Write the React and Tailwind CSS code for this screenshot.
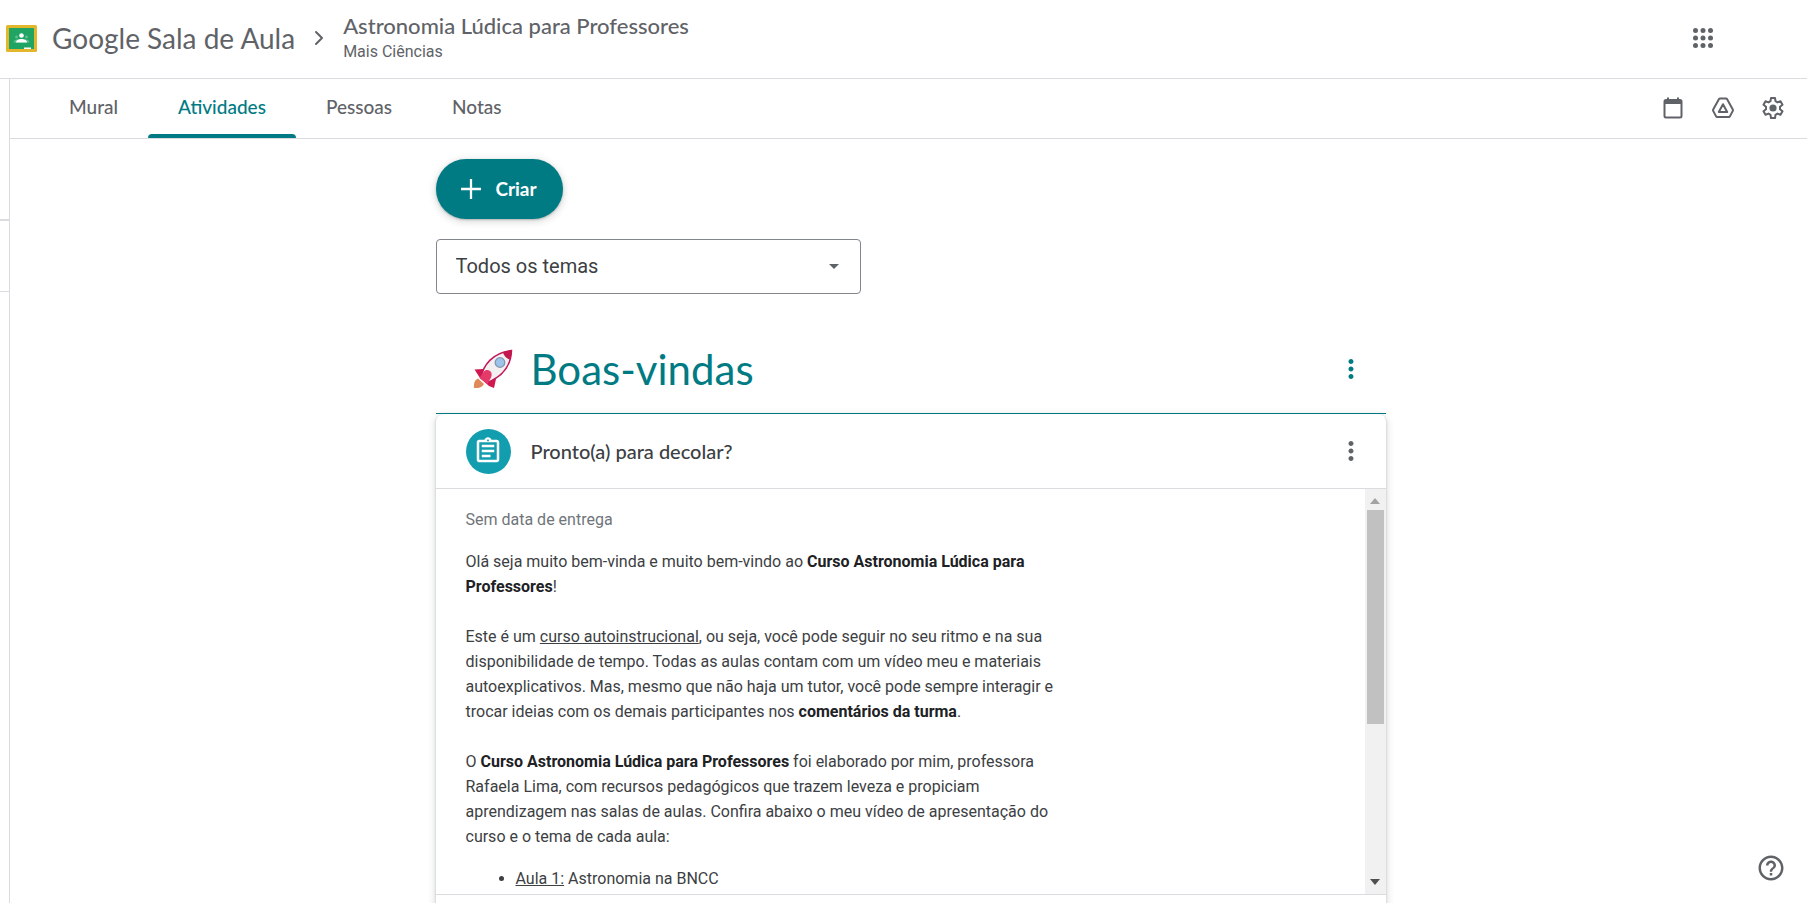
import { ChevronRight } from 'lucide-react';
import { MdMoreVert, MdOutlineAssignment, MdHelpOutline } from 'react-icons/md';

const TABS = ['Mural', 'Atividades', 'Pessoas', 'Notas'];

function ClassroomLogo() {
  return (
    <svg viewBox="0 0 31 27" className="h-[27px] w-[31px] shrink-0" aria-hidden="true">
      <rect width="31" height="27" rx="1.500" fill="#e3b62b" />
      <rect x="3" y="3" width="25" height="21" fill="#1fa463" />
      <circle cx="15.500" cy="10.500" r="2.300" fill="#fff" />
      <circle cx="10.500" cy="12" r="1.400" fill="#5fc08f" />
      <circle cx="20.500" cy="12" r="1.400" fill="#5fc08f" />
      <path d="M7.500 17.500c0-2 2-3 3.500-3h9c1.500 0 3.500 1 3.500 3z" fill="#5fc08f" />
      <path d="M10 17.500c0-2.500 3-3.500 5.500-3.500s5.500 1 5.500 3.500z" fill="#fff" />
      <rect x="18" y="22.500" width="7" height="1.500" fill="#fff" />
    </svg>
  );
}

function AppsIcon() {
  return (
    <svg viewBox="0 0 24 24" className="size-[30px]" fill="currentColor" aria-hidden="true">
      {[6, 12, 18].map((y) => [6, 12, 18].map((x) => <circle key={`${x}-${y}`} cx={x} cy={y} r="2" />))}
    </svg>
  );
}

function CalendarIcon() {
  return (
    <svg viewBox="0 0 24 24" className="size-6" fill="none" stroke="currentColor" strokeWidth="2" aria-hidden="true">
      <rect x="3.500" y="4" width="17" height="17.500" rx="1.500" />
      <path d="M3.500 6h17" strokeWidth="4" />
      <path d="M7 1.500v4M17 1.500v4" />
    </svg>
  );
}

function DriveIcon() {
  return (
    <svg viewBox="0 0 24 24" className="size-6" fill="none" stroke="currentColor" strokeWidth="2" strokeLinejoin="round" aria-hidden="true">
      <path d="M9 2.500h6q.7 0 1 .6l5.800 10.400q.4.700 0 1.400l-2.900 5.500q-.4.600-1.100.6H6.200q-.7 0-1.100-.6l-2.900-5.500q-.4-.7 0-1.400L8 3.100q.3-.6 1-.6z" />
      <path d="M12 8.200l4.200 7.800H7.800z" />
    </svg>
  );
}

function GearIcon() {
  return (
    <svg viewBox="0 0 24 24" className="size-6" fill="none" stroke="currentColor" strokeWidth="2" strokeLinejoin="round" aria-hidden="true">
      <path d="M10 2h4l.5 3.200 2 1.200 3-1.200 2 3.500-2.500 2v2.600l2.500 2-2 3.500-3-1.200-2 1.200L14 22h-4l-.5-3.200-2-1.200-3 1.200-2-3.500 2.500-2v-2.600l-2.500-2 2-3.500 3 1.200 2-1.200z" />
      <circle cx="12" cy="12" r="3.600" fill="currentColor" stroke="none" />
    </svg>
  );
}

function Rocket() {
  return (
    <svg viewBox="0 0 40 40" className="size-10 shrink-0" aria-hidden="true">
      <path d="M1 39c-.5-4 .5-8 4-9.500l6 5.500c-2 3.500-6 4.500-10 4z" fill="#e08a5b" />
      <path d="M10 20L1.500 20.500 7 29l9 8 5 2 2-9z" fill="#d0174e" />
      <path d="M8 29C10 16 20 3.500 38.500 1.500 38 18 28 28 14.500 33.500z" fill="#f3f0f1" stroke="#c2185b" strokeWidth="1.500" />
      <path d="M30 3.500c3-1.300 5.500-2 8.500-2 .2 3.500-.5 6.500-2 9-2.800-1-5.500-3.500-6.500-7z" fill="#c2184b" />
      <path d="M6.500 29l4-6c2-2.500 4.500-2.500 6.500-1s2 4 1 6.500L14.500 35z" fill="#e5396a" />
      <circle cx="27" cy="13.500" r="4.800" fill="#9cc3ea" stroke="#8296ad" strokeWidth="1.300" />
    </svg>
  );
}

function Header() {
  return (
    <header className="flex h-[79px] shrink-0 items-center border-b border-[#dadce0] pr-[89px] pb-0.5 pl-[6px] text-[#5f6368]">
      <ClassroomLogo />
      <span className="ml-[15px] font-['Lato',sans-serif] text-[28px]">Google Sala de Aula</span>
      <ChevronRight className="ml-3 size-6" strokeWidth={2} />
      <div className="ml-3">
        <h1 className="font-['Lato',sans-serif] text-[22px] leading-7 font-medium">Astronomia Lúdica para Professores</h1>
        <p className="text-base leading-6">Mais Ciências</p>
      </div>
      <button type="button" aria-label="Google Apps" className="ml-auto">
        <AppsIcon />
      </button>
    </header>
  );
}

function TabBar() {
  return (
    <nav className="flex h-[60px] shrink-0 items-stretch border-b border-[#dadce0] pr-[22px] pl-[29px] text-[#5f6368]">
      {TABS.map((tab) => (
        <button
          key={tab}
          type="button"
          className={`relative px-[30px] pb-0.5 font-['Lato',sans-serif] text-[19px] font-medium ${tab === 'Atividades' ? 'text-[#007b83]' : ''}`}
        >
          {tab}
          {tab === 'Atividades' && <span className="absolute inset-x-0 bottom-0 h-1 rounded-t bg-[#007b83]" />}
        </button>
      ))}
      <div className="ml-auto flex items-center gap-[26px] pb-0.5">
        <button type="button" aria-label="Google Agenda"><CalendarIcon /></button>
        <button type="button" aria-label="Google Drive"><DriveIcon /></button>
        <button type="button" aria-label="Configurações"><GearIcon /></button>
      </div>
    </nav>
  );
}

function Scrollbar() {
  return (
    <div className="flex w-[21px] shrink-0 flex-col items-center bg-[#f1f1f1]" aria-hidden="true">
      <svg viewBox="0 0 10 6" className="mt-[9px] mb-1.5 h-1.5 w-2.5 shrink-0" fill="#a3a3a3"><path d="M5 0l5 6H0z" /></svg>
      <div className="h-[214px] w-[17px] shrink-0 bg-[#c1c1c1]" />
      <svg viewBox="0 0 10 6" className="mt-auto mb-[9px] h-1.5 w-2.5 shrink-0" fill="#505050"><path d="M5 6l5-6H0z" /></svg>
    </div>
  );
}

function Assignment() {
  return (
    <article className="rounded-t-lg shadow-[0_1px_2px_rgba(60,64,67,0.3),0_2px_6px_2px_rgba(60,64,67,0.15)]">
      <header className="flex h-[75px] items-center border-b border-[#dadce0] pr-[20px] pl-[30px]">
        <span className="flex size-[45px] items-center justify-center rounded-full bg-[#129eaf] text-white">
          <MdOutlineAssignment className="size-[30px]" />
        </span>
        <h3 className="ml-5 font-['Lato',sans-serif] text-[20px] font-medium text-[#3c4043]">Pronto(a) para decolar?</h3>
        <button type="button" aria-label="Opções da atividade" className="ml-auto text-[#5f6368]">
          <MdMoreVert className="size-[30px]" />
        </button>
      </header>

      <div className="flex h-[406px] border-b border-[#dadce0]">
        <div className="min-w-0 flex-1 overflow-hidden px-[30px] pt-[18px] text-base leading-[25px] text-[#3c4043]">
          <p className="mb-[17px] text-[#70757a]">Sem data de entrega</p>
          <div className="max-w-[600px]">
            <p className="mb-[25px]">
              Olá seja muito bem-vinda e muito bem-vindo ao <b className="text-[#202124]">Curso Astronomia Lúdica para Professores</b>!
            </p>
            <p className="mb-[25px]">
              Este é um <u>curso autoinstrucional</u>, ou seja, você pode seguir no seu ritmo e na sua disponibilidade de
              tempo. Todas as aulas contam com um vídeo meu e materiais autoexplicativos. Mas, mesmo que não haja um
              tutor, você pode sempre interagir e trocar ideias com os demais participantes
              nos <b className="text-[#202124]">comentários da turma</b>.
            </p>
            <p className="mb-[17px]">
              O <b className="text-[#202124]">Curso Astronomia Lúdica para Professores</b> foi elaborado por mim,
              professora Rafaela Lima, com recursos pedagógicos que trazem leveza e propiciam aprendizagem nas salas de
              aulas. Confira abaixo o meu vídeo de apresentação do curso e o tema de cada aula:
            </p>
            <ul className="list-disc pl-[50px]">
              <li><u>Aula 1:</u> Astronomia na BNCC</li>
            </ul>
          </div>
        </div>
        <Scrollbar />
      </div>
      <div className="h-16" />
    </article>
  );
}

export default function App() {
  return (
    <div className="flex h-screen flex-col overflow-hidden bg-white font-['Roboto',sans-serif]">
      <Header />
      <div className="flex min-h-0 flex-1">
        {/* collapsed side menu */}
        <aside className="w-2.5 shrink-0 border-r border-[#dadce0] pt-[140px]">
          <div className="h-[73px] border-t-2 border-b border-[#dadce0]" />
        </aside>

        <div className="flex min-w-0 flex-1 flex-col">
          <TabBar />
          <main className="min-h-0 flex-1 overflow-hidden pt-5 pl-1">
            <div className="mx-auto max-w-[950px]">
              <button
                type="button"
                className="flex h-[60px] w-[127px] items-center justify-center gap-3.5 rounded-full bg-[#007b83] font-['Lato',sans-serif] text-[19px] font-bold text-white shadow-[0_1px_2px_rgba(60,64,67,0.3),0_2px_6px_2px_rgba(60,64,67,0.15)]"
              >
                <svg viewBox="0 0 22 22" className="size-5" stroke="currentColor" strokeWidth="2.500" aria-hidden="true">
                  <path d="M11 0v22M0 11h22" />
                </svg>
                Criar
              </button>

              <div className="relative mt-5 h-[55px] w-[425px]">
                <select
                  aria-label="Filtro de temas"
                  className="size-full appearance-none rounded border border-[#80868b] px-[19px] pb-0.5 text-xl text-[#3c4043]"
                >
                  <option>Todos os temas</option>
                </select>
                <svg viewBox="0 0 10 5" className="pointer-events-none absolute top-[25px] right-[22px] h-[5px] w-2.5" fill="#5f6368" aria-hidden="true">
                  <path d="M0 0h10L5 5z" />
                </svg>
              </div>

              <section className="mt-[31px]">
                <div className="flex h-[89px] items-center border-b border-[#007b83] pr-[20px] pl-[37px] text-[#007b83]">
                  <Rocket />
                  <h2 className="ml-[18px] font-['Lato',sans-serif] text-[42px]">Boas-vindas</h2>
                  <button type="button" aria-label="Opções do tema" className="ml-auto">
                    <MdMoreVert className="size-[30px]" />
                  </button>
                </div>
                <Assignment />
              </section>
            </div>
          </main>
        </div>
      </div>

      <button type="button" aria-label="Ajuda" className="fixed right-[21px] bottom-[20px] text-[#5f6368]">
        <MdHelpOutline className="size-[30px]" />
      </button>
    </div>
  );
}
